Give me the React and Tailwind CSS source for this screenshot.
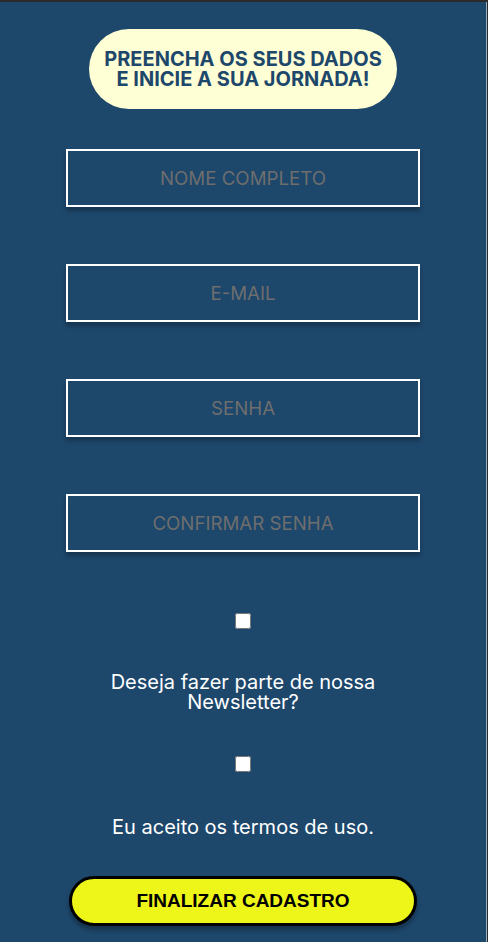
import React from "react";

const inputs = ["NOME COMPLETO", "E-MAIL", "SENHA", "CONFIRMAR SENHA"];

export default function App() {
  return (
    <div className="min-h-[942px] w-[488px] bg-[#2b2b2b] pt-[2px] font-['Inter',sans-serif]">
      <div className="flex min-h-[940px] w-[487px] flex-col items-center border-r border-[#9cb0c4] bg-[#1d476b] pt-[27px] pb-[14px]">
        <div className="flex h-[80px] w-[308px] items-center justify-center rounded-full bg-[#ffffd6] text-center text-[20px] font-bold leading-[20px] text-[#1d476b]">
          PREENCHA OS SEUS DADOS
          <br />
          E INICIE A SUA JORNADA!
        </div>
        <div className="mt-[40px] flex flex-col gap-[57px]">
          {inputs.map((p) => (
            <input
              key={p}
              placeholder={p}
              className="h-[58px] w-[354px] border-2 border-white bg-transparent text-center text-[18.7px] text-white shadow-[0_4px_4px_rgba(0,0,0,0.25)] outline-none placeholder:text-[#6e6e6e]"
            />
          ))}
        </div>
        <input type="checkbox" className="mt-[61px] h-[16px] w-[16px]" />
        <p className="mt-[43px] w-[290px] text-center text-[20px] leading-[20px] text-white">
          Deseja fazer parte de nossa Newsletter?
        </p>
        <input type="checkbox" className="mt-[44px] h-[16px] w-[16px]" />
        <p className="mt-[45px] text-center text-[20px] leading-[20px] text-white">
          Eu aceito os termos de uso.
        </p>
        <button className="mt-[39px] h-[50px] w-[348px] rounded-full border-[3px] border-black bg-[#eef519] font-['Liberation_Sans',sans-serif] text-[19px] font-bold text-black shadow-[0_4px_4px_rgba(0,0,0,0.3)]">
          FINALIZAR CADASTRO
        </button>
      </div>
    </div>
  );
}
